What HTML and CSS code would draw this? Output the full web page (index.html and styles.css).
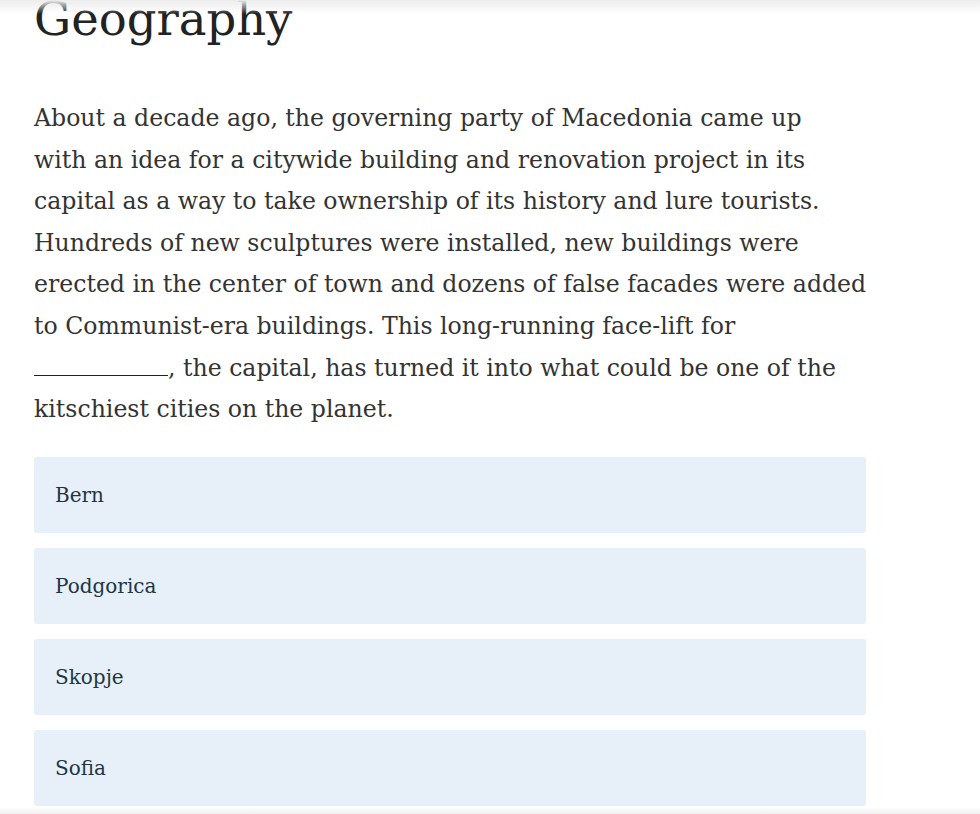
FILE: index.html
```html
<!DOCTYPE html>
<html lang="en">
<head>
<meta charset="utf-8">
<title>Geography</title>
<link rel="stylesheet" href="styles.css">
</head>
<body>
<div class="topbar"></div>
<main class="quiz">
  <h1 class="title">Geography</h1>
  <p class="question">About a decade ago, the governing party of Macedonia came up<br>with an idea for a citywide building and renovation project in its<br>capital as a way to take ownership of its history and lure tourists.<br>Hundreds of new sculptures were installed, new buildings were<br>erected in the center of town and dozens of false facades were added<br>to Communist-era buildings. This long-running face-lift for<br><span class="blank"></span>, the capital, has turned it into what could be one of the<br>kitschiest cities on the planet.</p>
  <ul class="options">
    <li class="option">Bern</li>
    <li class="option">Podgorica</li>
    <li class="option">Skopje</li>
    <li class="option">Sofia</li>
  </ul>
</main>
<div class="bottombar"></div>
</body>
</html>
```
FILE: styles.css
```css
html, body {
  margin: 0;
  padding: 0;
  background: #ffffff;
}
body {
  width: 980px;
  height: 814px;
  overflow: hidden;
  position: relative;
}
.topbar {
  position: absolute;
  left: 0;
  top: 0;
  width: 100%;
  height: 14px;
  background: linear-gradient(#ededed, rgba(255,255,255,0));
  z-index: 2;
}
.bottombar {
  position: absolute;
  left: 0;
  bottom: 0;
  width: 100%;
  height: 7px;
  background: linear-gradient(rgba(255,255,255,0), #f0f0f0);
}
.quiz {
  width: 832px;
  margin-left: 34px;
}
.title {
  margin: -12px 0 0 0;
  font-family: "DejaVu Serif", serif;
  font-weight: normal;
  font-size: 46.5px;
  line-height: 62px;
  color: #222222;
}
.question {
  margin: 48px 0 0 0;
  font-family: "DejaVu Serif", serif;
  font-size: 23.6px;
  line-height: 41.6px;
  color: #333333;
  white-space: nowrap;
}
.blank {
  display: inline-block;
  width: 134px;
  border-bottom: 1.5px solid #222;
  vertical-align: baseline;
}
.options {
  list-style: none;
  margin: 26px 0 0 0;
  padding: 0;
  display: flex;
  flex-direction: column;
  gap: 15px;
}
.option {
  height: 76px;
  box-sizing: border-box;
  padding: 0 21px;
  display: flex;
  align-items: center;
  background: #e7f0f8;
  border-radius: 3px;
  font-family: "DejaVu Serif", serif;
  font-size: 20px;
  color: #1e3545;
}
```
